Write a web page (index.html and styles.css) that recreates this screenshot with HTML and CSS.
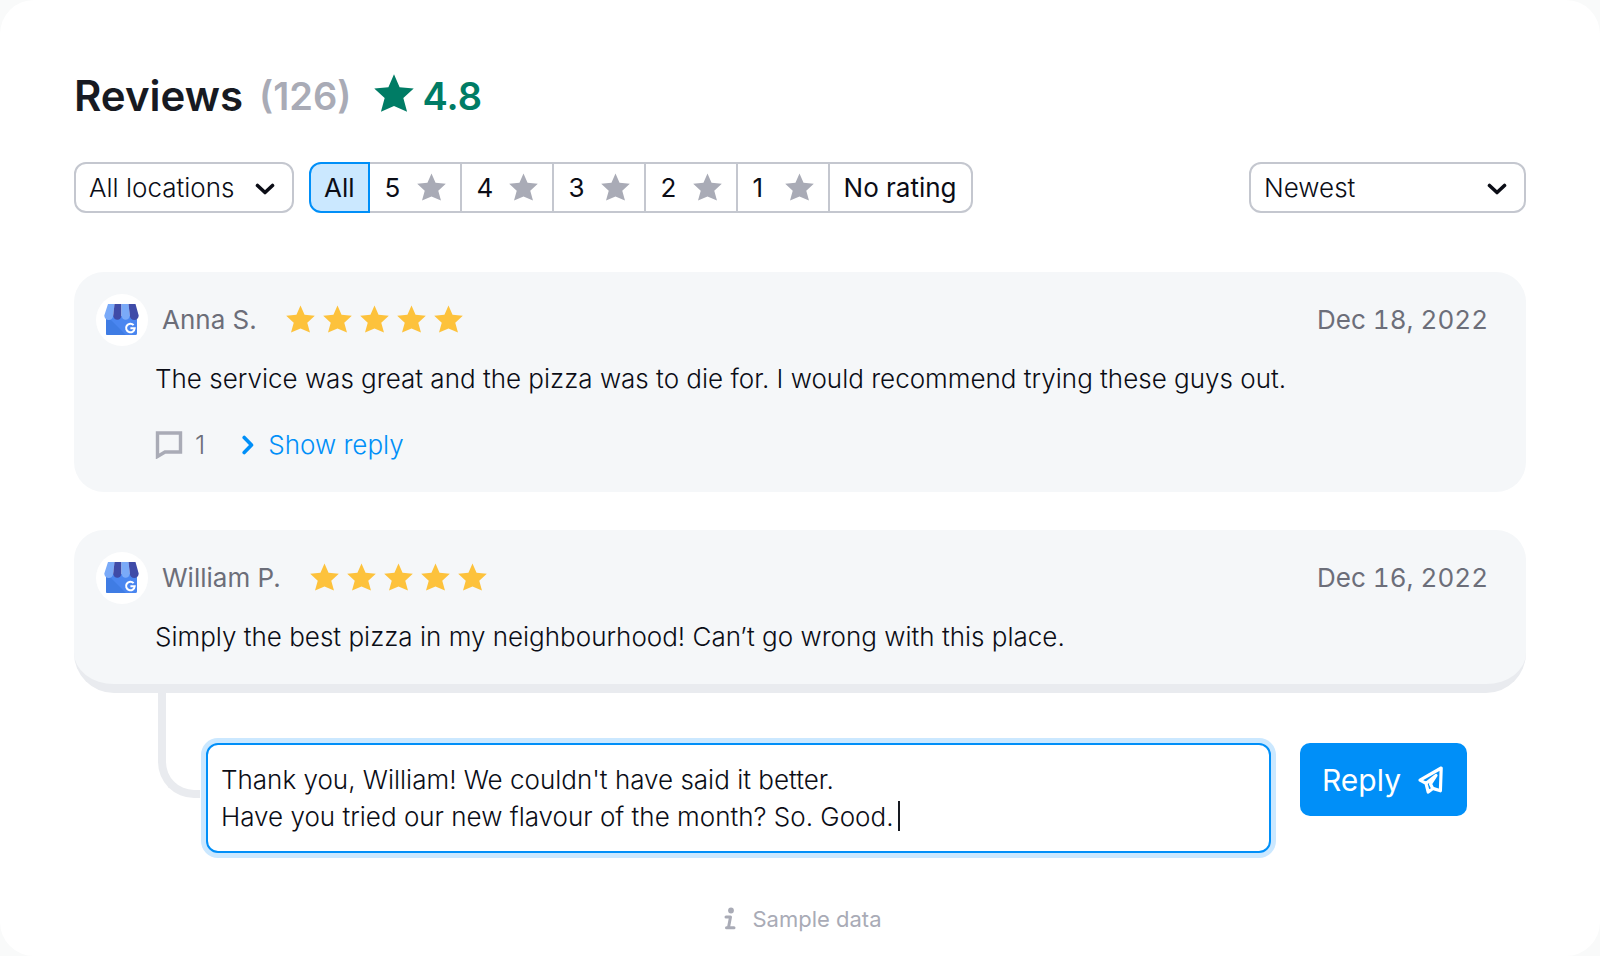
FILE: index.html
```html
<!DOCTYPE html>
<html lang="en">
<head>
<meta charset="UTF-8" />
<meta name="viewport" content="width=device-width, initial-scale=1" />
<title>Reviews</title>
<link rel="stylesheet" href="styles.css">
</head>
<body>

<!-- Shared icons -->
<svg class="sprite" aria-hidden="true">
  <symbol id="star" viewBox="0 0 30 28">
    <path d="M15 0l4.2 9.6L29.8 10.600l-7.800 7.200L24.800 28 15 23.800 5.200 28 8 17.800.2 10.600l10.600-1z" />
  </symbol>
  <symbol id="chevron" viewBox="0 0 20 12">
    <path d="M2.500 2.500L10 9.500l7.500-7" fill="none" stroke="currentColor" stroke-width="3.600" stroke-linecap="round" stroke-linejoin="round" />
  </symbol>
  <symbol id="shop" viewBox="0 0 36 32">
    <path d="M2 12h31v17.500a1.500 1.500 0 0 1-1.500 1.500h-28A1.500 1.500 0 0 1 2 29.500z" fill="#4a86f0" />
    <path d="M5 14l17 17H3.500A1.500 1.500 0 0 1 2 29.500V14z" fill="#3f7ce4" />
    <path d="M4 0h6.500L9.200 11.500a4.400 4.400 0 0 1-8.900 0z" fill="#7aaaf8" />
    <path d="M10.500 0h7v11.500a4.150 4.150 0 0 1-8.300 0z" fill="#3f4ba8" />
    <path d="M17.500 0h7l1.300 11.500a4.150 4.150 0 0 1-8.300 0z" fill="#7aaaf8" />
    <path d="M24.500 0H31.500l3.200 11.500a4.400 4.400 0 0 1-8.900 0z" fill="#3f4ba8" />
    <path d="M29.600 21.100a4.300 4.300 0 1 0 1.100 3.200h-4.300" fill="none" stroke="#fff" stroke-width="2" />
  </symbol>
</svg>

<main class="panel">
  <header class="heading">
    <h1>Reviews</h1>
    <span class="count">(126)</span>
    <span class="score"><svg class="score-star"><use href="#star" /></svg>4.8</span>
  </header>

  <div class="toolbar">
    <div class="select select-location">
      <select aria-label="Location">
        <option>All locations</option>
      </select>
      <svg class="chevron"><use href="#chevron" /></svg>
    </div>

    <div class="ratings" role="group" aria-label="Rating">
      <button type="button" class="active">All</button>
      <button type="button" class="rate">5 <svg class="star"><use href="#star" /></svg></button>
      <button type="button" class="rate">4 <svg class="star"><use href="#star" /></svg></button>
      <button type="button" class="rate">3 <svg class="star"><use href="#star" /></svg></button>
      <button type="button" class="rate">2 <svg class="star"><use href="#star" /></svg></button>
      <button type="button" class="rate">1 <svg class="star"><use href="#star" /></svg></button>
      <button type="button">No rating</button>
    </div>

    <div class="select select-sort">
      <select aria-label="Sort by">
        <option>Newest</option>
      </select>
      <svg class="chevron"><use href="#chevron" /></svg>
    </div>
  </div>

  <article class="review">
    <div class="review-head">
      <span class="avatar"><svg><use href="#shop" /></svg></span>
      <span class="author">Anna S.</span>
      <span class="stars" role="img" aria-label="5 stars">
        <svg class="star"><use href="#star" /></svg>
        <svg class="star"><use href="#star" /></svg>
        <svg class="star"><use href="#star" /></svg>
        <svg class="star"><use href="#star" /></svg>
        <svg class="star"><use href="#star" /></svg>
      </span>
      <time datetime="2022-12-18">Dec 18, 2022</time>
    </div>
    <p>The service was great and the pizza was to die for. I would recommend trying these guys out.</p>
    <div class="review-foot">
      <svg class="comment" viewBox="0 0 28 28"><path d="M2.500 2h23v19H10L2.500 25.500z" fill="none" stroke="currentColor" stroke-width="3.400" /></svg>
      <span>1</span>
      <a href="#reply"><svg class="arrow" viewBox="0 0 12 20"><path d="M2.200 2.500L9.500 10l-7.300 7.500" fill="none" stroke="currentColor" stroke-width="3.600" stroke-linecap="round" stroke-linejoin="round" /></svg>Show reply</a>
    </div>
  </article>

  <article class="review review-open">
    <div class="review-head">
      <span class="avatar"><svg><use href="#shop" /></svg></span>
      <span class="author">William P.</span>
      <span class="stars" role="img" aria-label="5 stars">
        <svg class="star"><use href="#star" /></svg>
        <svg class="star"><use href="#star" /></svg>
        <svg class="star"><use href="#star" /></svg>
        <svg class="star"><use href="#star" /></svg>
        <svg class="star"><use href="#star" /></svg>
      </span>
      <time datetime="2022-12-16">Dec 16, 2022</time>
    </div>
    <p>Simply the best pizza in my neighbourhood! Can’t go wrong with this place.</p>
  </article>

  <form class="reply" id="reply">
    <span class="connector"></span>
    <div class="reply-box">
      <textarea aria-label="Your reply" rows="2" spellcheck="false">Thank you, William! We couldn't have said it better.
Have you tried our new flavour of the month? So. Good.</textarea>
      <span class="caret"></span>
    </div>
    <button type="button">Reply
      <svg viewBox="0 0 28 30"><path d="M24.200 3L3 15.200l6 3.200 2.200 8.600 4.600-3.600 7.600 2.400zM9.200 18.200L19 10.500l-5.500 8.500 2 4" fill="none" stroke="currentColor" stroke-width="3.200" stroke-linejoin="round" stroke-linecap="round" /></svg>
    </button>
  </form>

  <footer class="note">
    <svg viewBox="0 0 12 24"><circle cx="7" cy="3.500" r="2.900" /><path d="M2 10h4.500L4.500 20.500M2.500 20.800h7.500" fill="none" stroke="currentColor" stroke-width="3" stroke-linecap="round" stroke-linejoin="round" /></svg>
    Sample data
  </footer>
</main>

</body>
</html>
```
FILE: styles.css
```css
* {
  box-sizing: border-box;
}
body {
  margin: 0;
  background: #f9fafa;
  font-family: Inter, "Liberation Sans", sans-serif;
  font-optical-sizing: none;
  font-size: 26px;
  font-weight: 300;
  line-height: 36px;
  color: #0b0d16;
}
button,
select,
textarea {
  font: inherit;
  color: inherit;
}
svg {
  display: block;
  flex: none;
  fill: currentColor;
}
.sprite {
  position: absolute;
  width: 0;
  height: 0;
}
.panel {
  min-height: 100vh;
  padding: 68px 74px 10px;
  background: #fff;
  border-radius: 34px;
}

/* Heading */
.heading {
  display: flex;
  align-items: center;
  gap: 16px;
  height: 56px;
  font-size: 38px;
  font-weight: 600;
}
.heading h1 {
  margin: 0;
  color: #171a22;
  font-size: 42px;
  font-weight: 600;
}
.count {
  color: #a9abb6;
}
.score {
  display: flex;
  align-items: center;
  gap: 9px;
  margin-left: 6px;
  color: #007c65;
}
.score-star {
  width: 40px;
  height: 38px;
  margin-bottom: 6px;
}
.star {
  width: 29px;
  height: 28px;
}

/* Filters */
.toolbar {
  display: flex;
  margin-top: 38px;
}
.select {
  position: relative;
  height: 51px;
}
.select select {
  width: 100%;
  height: 100%;
  padding: 0 13px;
  appearance: none;
  background: #fff;
  border: 2px solid #c4c7cf;
  border-radius: 12px;
}
.chevron {
  position: absolute;
  top: 21px;
  right: 19px;
  width: 20px;
  height: 12px;
  pointer-events: none;
}
.select-location {
  width: 220px;
  margin-right: 15px;
}
.select-sort {
  width: 277px;
  margin-left: auto;
}
.ratings {
  display: flex;
}
.ratings button {
  display: flex;
  align-items: center;
  height: 51px;
  margin-left: -2px;
  padding: 0 14px;
  background: #fff;
  border: 2px solid #c4c7cf;
  font-weight: 400;
}
.ratings .rate {
  justify-content: space-between;
  width: 94px;
  padding: 0 14px 0 15px;
}
.ratings .star {
  margin-bottom: 2px;
  color: #a9abb6;
}
.ratings button:first-child {
  margin-left: 0;
  padding: 0 13px;
  border-radius: 12px 0 0 12px;
}
.ratings button:last-child {
  border-radius: 0 12px 12px 0;
}
.ratings .active {
  z-index: 1;
  background: #cbe8ff;
  border-color: #008ff8;
}

/* Reviews */
.review {
  margin-top: 38px;
  padding: 22px 38px 29px 22px;
  background: #f5f7f9;
  border-radius: 30px;
}
.toolbar + .review {
  margin-top: 59px;
}
.review-head {
  display: flex;
  align-items: center;
  color: #6c6e79;
  font-weight: 400;
}
.avatar {
  display: flex;
  align-items: center;
  justify-content: center;
  width: 52px;
  height: 52px;
  margin-right: 14px;
  background: #fff;
  border-radius: 50%;
}
.avatar svg {
  width: 36px;
  height: 32px;
}
.stars {
  display: flex;
  gap: 8px;
  margin: 0 0 2px 29px;
  color: #fdc23c;
}
.review time {
  margin-left: auto;
  font-variant-numeric: tabular-nums;
}
.review p {
  margin: 15px 0 0 59px;
}
.review-foot {
  display: flex;
  align-items: center;
  margin: 30px 0 0 59px;
  color: #6c6e79;
}
.comment {
  width: 28px;
  height: 28px;
  margin-right: 12px;
  color: #a9abb6;
}
.review-foot a {
  display: flex;
  align-items: center;
  gap: 14px;
  margin-left: 37px;
  color: #008ff8;
  text-decoration: none;
}
.arrow {
  width: 12px;
  height: 20px;
}
.review-open {
  border-bottom: 9px solid #e9ebef;
  border-radius: 30px 30px 40px 40px;
}

/* Reply form */
.reply {
  display: flex;
  align-items: flex-start;
  padding: 0 59px 0 84px;
}
.connector {
  width: 42px;
  height: 105px;
  border-left: 8px solid #e9ebef;
  border-bottom: 8px solid #e9ebef;
  border-bottom-left-radius: 36px;
}
.reply-box {
  position: relative;
  flex: 1;
  margin: 50px 29px 0 6px;
}
.reply textarea {
  display: block;
  width: 100%;
  height: 110px;
  padding: 16px 13px;
  line-height: 37px;
  background: #fff;
  border: 2px solid #008ff8;
  border-radius: 12px;
  box-shadow: 0 0 0 5px #cbe8ff;
  outline: none;
  overflow: hidden;
  resize: none;
}
.caret {
  position: absolute;
  top: 58px;
  left: 692px;
  width: 2px;
  height: 30px;
  background: #171a22;
}
.reply button {
  display: flex;
  align-items: center;
  justify-content: space-between;
  width: 167px;
  height: 73px;
  margin-top: 50px;
  padding: 0 22px;
  background: #008ff8;
  border: 0;
  border-radius: 10px;
  color: #fff;
  font-size: 30px;
  font-weight: 400;
}
.reply button svg {
  width: 28px;
  height: 30px;
}

/* Footer */
.note {
  display: flex;
  align-items: center;
  justify-content: center;
  gap: 16px;
  margin-top: 48px;
  padding-left: 6px;
  color: #a9abb6;
  font-size: 22px;
  font-weight: 400;
}
.note svg {
  width: 12px;
  height: 24px;
}
```
